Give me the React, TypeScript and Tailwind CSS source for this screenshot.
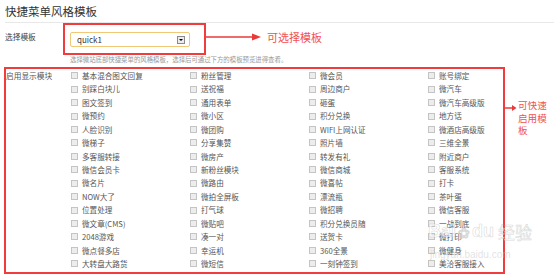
import React from "react";

const items: string[] = [
  "基本混合图文回复", "粉丝管理", "微会员", "账号绑定",
  "别踩白块儿", "送祝福", "周边商户", "微汽车",
  "图文签到", "通用表单", "砸蛋", "微汽车高级版",
  "微预约", "微小区", "积分兑换", "地方话",
  "人脸识别", "微团购", "WIFI上网认证", "微酒店高级版",
  "微梯子", "分享集赞", "照片墙", "三维全景",
  "多客服转接", "微房产", "转发有礼", "附近商户",
  "微信会员卡", "新粉丝模块", "微信商城", "客服系统",
  "微名片", "微路由", "微喜帖", "打卡",
  "NOW大了", "微拍全屏板", "漂流瓶", "茶叶蛋",
  "位置处理", "打气球", "微招聘", "微信客服",
  "微文章(CMS)", "微贴吧", "积分兑换员随", "一战到底",
  "2048游戏", "凑一对", "送贺卡", "微打印",
  "微点餐多店", "幸运机", "360全景", "微健身",
  "大转盘大路货", "微短信", "一刻钟签到", "美洽客服接入",
];

const font = "font-['Microsoft_YaHei','Noto_Sans_CJK_SC',sans-serif]";

export default function App() {
  return (
    <div className={`relative w-[558px] h-[276px] overflow-hidden bg-white ${font}`}>
      <div className="pl-[5px] pr-[4px] pt-[4px]">
        <div className="text-[11.5px] leading-[15px] text-[#333]">快捷菜单风格模板</div>
        <div className="mt-[3px] h-px bg-[#e8e8e8]" />
      </div>

      <div className="flex items-start pl-[5px]">
        <div className="w-[58px] pt-[9px] text-[7.7px] leading-[10px] text-[#444]">选择模板</div>
        <div className="border-2 border-[#f03c3c] pl-[5px] pr-[14px] pt-[7px] pb-[6px]">
          <div className="flex h-[15px] w-[120px] items-center justify-between rounded-[2px] border border-[#f0c878] bg-white pl-[6px] pr-[4px]">
            <span className="text-[8px] leading-none text-[#333]">quick1</span>
            <span className="flex h-[8px] w-[8px] items-center justify-center border border-[#8a8a8a] bg-[#ececec]">
              <span className="h-0 w-0 border-l-[2px] border-r-[2px] border-t-[2px] border-l-transparent border-r-transparent border-t-black" />
            </span>
          </div>
        </div>
        <svg width="56" height="10" className="mt-[9px]" viewBox="0 0 56 10">
          <line x1="0" y1="5" x2="48" y2="5" stroke="#e83a3a" strokeWidth="1.5" />
          <polygon points="46,1.5 55,5 46,8.5" fill="#e83a3a" />
        </svg>
        <div className="ml-[5px] pt-[7px] text-[11px] leading-[14px] text-[#f05252]">可选择模板</div>
      </div>
      <div className="ml-[70px] mt-[1px] text-[6.4px] leading-[8px] text-[#999]">
        选择微站底部快捷菜单的风格模板，选择后可通过下方的模板预览进得查看。
      </div>

      <div className="mt-[3px] flex items-start pl-[4px]">
        <div className="flex w-[501px] border-2 border-[#f03c3c] pb-[1px]">
          <div className="w-[65px] shrink-0 text-[7.7px] leading-[13.45px] text-[#555]">启用显示模块</div>
          <div className="grid grid-cols-[119px_119px_119px_1fr]">
            {items.map((t, i) => (
              <div key={i} className="flex h-[13.45px] items-center">
                <span className="mr-[4px] inline-block h-[7px] w-[7px] shrink-0 border border-[#c4c4c4] bg-[#ededed]" />
                <span className="whitespace-nowrap text-[7.6px] leading-none text-[#555]">{t}</span>
              </div>
            ))}
          </div>
        </div>
        <div className="flex items-start pt-[32px]">
          <svg width="12" height="8" viewBox="0 0 12 8" className="mt-[5px]">
            <line x1="0" y1="4" x2="8" y2="4" stroke="#e83a3a" strokeWidth="1.5" />
            <polygon points="7,1 11.5,4 7,7" fill="#e83a3a" />
          </svg>
          <div className="w-[31px] pl-[1px] text-[9.6px] leading-[12.5px] text-[#f05252]">
            可快速启用模板
          </div>
        </div>
      </div>

      <div className="pointer-events-none absolute left-[428px] top-[222px] flex items-end text-[18px] font-bold leading-none text-[rgba(255,255,255,0.6)] [-webkit-text-stroke:0.6px_rgba(170,170,170,0.45)] font-['Arial','Liberation_Sans',sans-serif]">
        <span>Bai</span>
        <span className="mx-[2px] text-[14px]">❀</span>
        <span>du</span>
        <span className={`ml-[4px] text-[17px] font-normal ${font}`}>经验</span>
      </div>
      <div className="pointer-events-none absolute left-[430px] top-[250px] text-[10px] leading-none text-[rgba(190,190,190,0.45)] font-['Arial','Liberation_Sans',sans-serif]">
        jingyan.baidu.com
      </div>
    </div>
  );
}
